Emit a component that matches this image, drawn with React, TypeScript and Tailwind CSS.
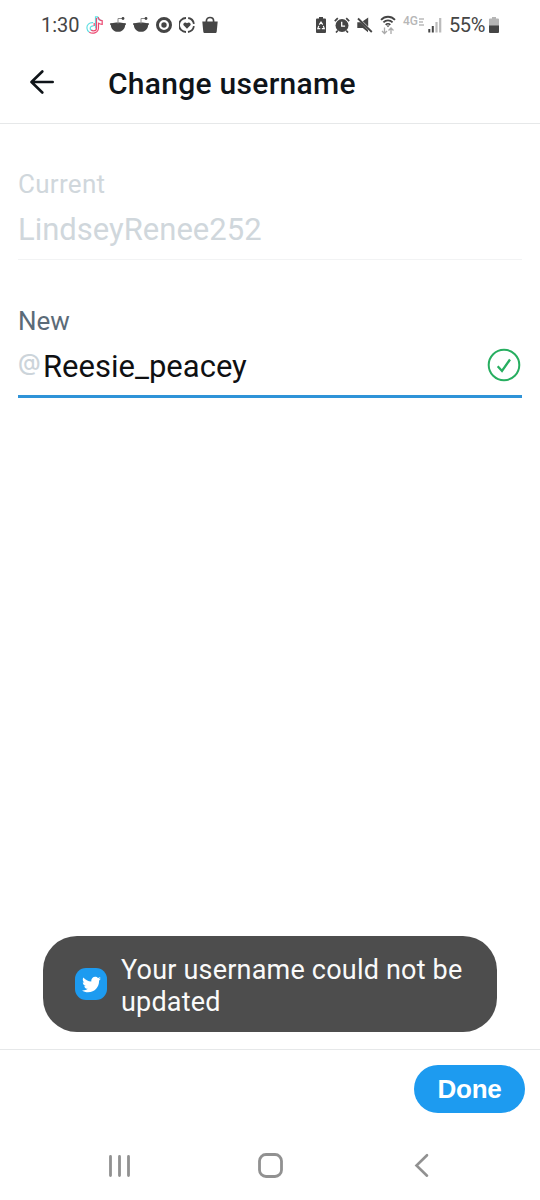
import React from "react";
import { FaTwitter } from "react-icons/fa6";

function TikTokIcon() {
  return (
    <svg viewBox="0 0 17 18" className="ml-[7px] h-[18px] w-[17px]" fill="none" strokeWidth="1.200">
      <path d="M7.200 6.700C3 6.300.7 9.200.9 12c.1 2 1.100 3.500 2.500 4.200M9.500 12.500V.9h2.200c.2 2 1.500 3.400 3.600 3.700" stroke="#62dfe2" />
      <path d="M7.700 9.900c-2-.2-3.500.9-3.500 2.300 0 1.300 1 2.200 2.300 2.200" stroke="#62dfe2" />
      <path d="M3.300 16.200c3.700 2.200 9.200.4 9.200-4.500V7.300c1.200.8 2.300 1 3.700 1V4.700c-1.900-.1-3.500-1.500-4-3.500M10.500 2v10.200c0 1.600-1.300 2.700-3 2.700-1 0-1.700-.3-2.200-.9M8.200 7v2.900" stroke="#ec4b73" />
    </svg>
  );
}

function RedditIcon() {
  return (
    <svg viewBox="0 0 16 18" className="h-[18px] w-4" fill="#454545">
      <path d="M1.600 7.200C5 6.300 11 6.300 14.400 7.200c.7-.4 1.500 0 1.600.8 0 .6-.4 1-.9 1.200-.2 4-3.200 6.600-7.100 6.600S1.100 13.200.9 9.200C.4 9 0 8.600 0 8c.1-.8.900-1.200 1.600-.8Z" />
      <path d="M8 7.500V2.500h4" fill="none" stroke="#8a8a8a" strokeWidth="1" />
      <circle cx="13" cy="2.500" r="1.400" />
    </svg>
  );
}

function StatusBar() {
  return (
    <header className="flex h-12 shrink-0 items-center pt-[2px] pl-[41px] text-[20px] leading-6 text-[#454545]">
      <span className="w-[38px] whitespace-nowrap">1:30</span>
      <TikTokIcon />
      <div className="ml-[7px] flex items-center gap-[7px]">
        <RedditIcon />
        <RedditIcon />
        <svg viewBox="0 0 16 16" className="size-4">
          <circle cx="8" cy="8" r="6.500" fill="none" stroke="#454545" strokeWidth="3" />
          <circle cx="8" cy="8" r="2.700" fill="#454545" />
        </svg>
        <svg viewBox="0 0 16 16" className="size-4" fill="none" stroke="#454545" strokeWidth="1.800">
          <path d="M9.200 1A7 7 0 0 1 14.900 6.800M14.900 9.200A7 7 0 0 1 9 15M7 15A7 7 0 0 1 7 1" />
          <path d="M8 11.800 4.600 8.300C3.400 6.500 6 4.200 8 6.200c2-2 4.600.3 3.400 2.100Z" fill="#454545" stroke="none" />
        </svg>
        <svg viewBox="0 0 16 18" className="h-[18px] w-4" fill="#454545">
          <path d="M.3 5.500h15.400l-1 10.200c-.1.900-.7 1.400-1.500 1.400H2.800c-.8 0-1.400-.5-1.500-1.400Z" />
          <path d="M4.400 7V5c0-4.700 7.200-4.700 7.200 0v2" fill="none" stroke="#454545" strokeWidth="1.700" />
        </svg>
      </div>
      <svg viewBox="0 0 10 16" className="ml-[98px] h-4 w-[10px]">
        <path d="M3 0h4v1.500h2q1 0 1 1V15q0 1-1 1H1q-1 0-1-1V2.500q0-1 1-1h2Z" fill="#454545" />
        <path d="m3.300 7.600 1.700-2.500 1.700 2.500M7.300 8.900l1 2.700H5.800M4.300 11.600H1.800l1-2.700" fill="none" stroke="white" strokeWidth="1.200" />
      </svg>
      <svg viewBox="0 0 16 16" className="ml-[8px] size-4">
        <circle cx="8" cy="8.500" r="6.500" fill="#454545" />
        <path d="m.8 4.100 3-2.900M15.200 4.100l-3-2.900M3.800 13.500 2 15.500M12.200 13.500l1.800 2" stroke="#454545" strokeWidth="1.700" />
        <path d="M7.700 4.700v4.500h3.400" fill="none" stroke="white" strokeWidth="1.300" />
      </svg>
      <svg viewBox="0 0 16 16" className="ml-[7px] size-4">
        <path d="M.3 5.200h3.300L6 7.500l5 5.500v2.200L5.800 11H.3ZM5.800 4.300 11.200.6v9Z" fill="#454545" />
        <path d="m1 1.500 13.800 13.500" stroke="#454545" strokeWidth="1.800" />
      </svg>
      <svg viewBox="0 0 16 20" className="ml-[7px] h-5 w-4" fill="none">
        <path d="M1 4.900C5 .7 11 .7 15 4.900M3.400 7.400C6 4.700 10 4.700 12.600 7.400M5.700 9.800C7 8.500 9 8.500 10.300 9.800" stroke="#454545" strokeWidth="1.800" />
        <path d="m6.500 10.500 1.500 1.700 1.500-1.700Z" fill="#454545" />
        <path d="M4.500 12.500v6M2 16l2.500 2.500L7 16M11 19v-6M8.500 15.500 11 13l2.500 2.500" stroke="#aaa" strokeWidth="1.300" />
      </svg>
      <div className="ml-[7px] flex h-4 w-[23px] items-start">
        <span className="text-[12px] leading-[9px] font-medium text-[#b7b7b7]">4G</span>
        <svg viewBox="0 0 5 8" className="mt-px ml-px h-2 w-[5px]">
          <path d="M0 1h5M0 4h4M0 7h5" stroke="#bbb" strokeWidth="1.300" />
        </svg>
      </div>
      <svg viewBox="0 0 14 16" className="ml-[2px] h-4 w-[14px]">
        <path d="M1.300 12v3.500M4.800 9v6.500" stroke="#454545" strokeWidth="2" />
        <path d="M8.500 5v10.500M12.200 1v14.500" stroke="#bbb" strokeWidth="2.200" />
      </svg>
      <span className="ml-[7px] w-[38px] text-[20px] tracking-[-0.4px]">55%</span>
      <svg viewBox="0 0 10 16" className="ml-[2px] h-4 w-[10px]">
        <path d="M3 0h4v1.500h2q1 0 1 1V9H0V2.500q0-1 1-1h2Z" fill="#b5b5b5" />
        <path d="M0 8.500h10V15q0 1-1 1H1q-1 0-1-1Z" fill="#454545" />
      </svg>
    </header>
  );
}

export default function App() {
  return (
    <div className="relative flex h-[1200px] w-[540px] flex-col overflow-hidden bg-white font-[Roboto,sans-serif]">
      <StatusBar />
      <div className="flex h-[76px] shrink-0 items-center border-b border-[#e6e8e9] pb-[4px] pl-[30px]">
        <button className="h-6 w-6" aria-label="Back">
          <svg viewBox="0 0 24 24" className="-mt-[3px] size-6" fill="none" stroke="#0f1419" strokeWidth="2.600" strokeLinecap="round" strokeLinejoin="round">
            <path d="M22.700 12H1.800M12.300 1.500 1.500 12l10.800 10.500" />
          </svg>
        </button>
        <h1 className="ml-[54px] text-[30px] leading-9 font-medium tracking-[0.28px] whitespace-nowrap text-[#0f1419]">Change username</h1>
      </div>
      <main className="flex flex-1 flex-col px-[18px]">
        <section className="mt-[44px] flex h-[92px] flex-col border-b border-[#f2f3f4] text-[#d0d7dc]">
          <label className="text-[26px] leading-8 tracking-[0.3px]">Current</label>
          <div className="mt-[10px] text-[31px] leading-10">LindseyRenee252</div>
        </section>
        <section className="mt-[44px] flex h-[94px] flex-col border-b-[3px] border-[#2f93d8]">
          <label className="pt-px text-[26px] leading-8 text-[#5b6b78]">New</label>
          <div className="mt-[10px] flex h-10 items-center text-[31px] leading-10 text-[#0f1012]">
            <span className="w-[25px] pb-[10px] font-[Inter,sans-serif] text-[23px] font-medium tracking-[-1px] text-[#ccd4da]">@</span>
            <span>Reesie_peacey</span>
            <svg viewBox="0 0 34 34" className="mr-[1px] mb-[5px] ml-auto size-[34px]" fill="none" stroke="#27ae60" strokeWidth="2">
              <circle cx="17" cy="17" r="15.300" />
              <path d="m10.700 18.300 4.300 4.700 8-11.500" strokeWidth="2.300" />
            </svg>
          </div>
        </section>
      </main>
      <div role="status" className="absolute top-[936px] left-[43px] flex h-24 w-[454px] items-center rounded-[34px] bg-[#4d4d4d] pl-8">
        <span className="flex size-8 items-center justify-center rounded-[11px] bg-[#1d9bf0]">
          <FaTwitter className="size-[19px] text-white" />
        </span>
        <p className="ml-[14px] pt-[3px] text-[27px] leading-8 tracking-[0.2px] whitespace-nowrap text-[#fafafa]">
          Your username could not be
          <br />
          updated
        </p>
      </div>
      <footer className="flex h-[151px] shrink-0 flex-col border-t border-[#e6e8e9]">
        <button className="mt-[15px] mr-[15px] flex h-12 w-[111px] items-center justify-center self-end rounded-full bg-[#1d9bf0] font-['Liberation_Sans',sans-serif] text-[26px] font-bold tracking-[-0.2px] text-white">
          Done
        </button>
        <nav className="mt-[39px] flex h-[26px] items-center text-[#919191]">
          <svg viewBox="0 0 24 24" className="ml-[107px] size-6" stroke="currentColor" strokeWidth="2.800" strokeLinecap="round">
            <path d="M3.500 3.500v19M12.500 3.500v19M21.500 3.500v19" />
          </svg>
          <svg viewBox="0 0 26 26" className="ml-[126px] size-[26px]" fill="none" stroke="currentColor" strokeWidth="2.800">
            <rect x="2.500" y="2.500" width="22" height="22" rx="6.500" />
          </svg>
          <svg viewBox="0 0 16 26" className="ml-[131px] h-[26px] w-4" fill="none" stroke="currentColor" strokeWidth="2.600" strokeLinecap="round">
            <path d="M13 3.200 2.500 13.500 13 23.700" />
          </svg>
        </nav>
      </footer>
    </div>
  );
}
